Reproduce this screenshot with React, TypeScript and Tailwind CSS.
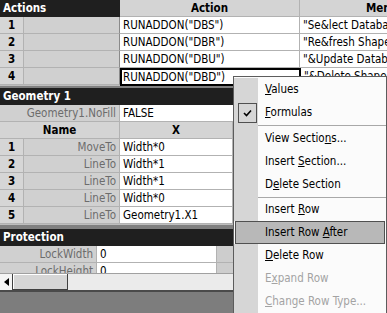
import React from "react";

// one grid cell of the sheet
function Cell({
  w,
  className = "",
  children,
}: {
  w: string;
  className?: string;
  children?: React.ReactNode;
}) {
  return (
    <div
      className={`${w} shrink-0 h-full border-r border-b border-[#b2b2b2] overflow-hidden whitespace-nowrap leading-[16px] ${className}`}
    >
      {children}
    </div>
  );
}

function SectionHeader({ title }: { title: string }) {
  return (
    <div className="h-[17px] flex bg-[#1f1f1f] text-white font-bold leading-[17px] pl-[3px] whitespace-nowrap">
      {title}
    </div>
  );
}

const actions = [
  { n: 1, action: 'RUNADDON("DBS")', menu: '"Se&lect Database Shapes"' },
  { n: 2, action: 'RUNADDON("DBR")', menu: '"Re&fresh Shape"' },
  { n: 3, action: 'RUNADDON("DBU")', menu: '"&Update Database"' },
  { n: 4, action: 'RUNADDON("DBD")', menu: '"&Delete Shape and Record"' },
];

const geometry = [
  { n: 1, name: "MoveTo", x: "Width*0" },
  { n: 2, name: "LineTo", x: "Width*1" },
  { n: 3, name: "LineTo", x: "Width*1" },
  { n: 4, name: "LineTo", x: "Width*0" },
  { n: 5, name: "LineTo", x: "Geometry1.X1" },
];

type Item = {
  label: React.ReactNode;
  checked?: boolean;
  active?: boolean;
  disabled?: boolean;
  sep?: number;
};

const items: Item[] = [
  { label: <><u>V</u>alues</> },
  { label: <><u>F</u>ormulas</>, checked: true },
  { sep: 3, label: null },
  { label: <>View Sectio<u>n</u>s...</> },
  { label: <>Insert <u>S</u>ection...</> },
  { label: <>D<u>e</u>lete Section</> },
  { sep: 2, label: null },
  { label: <>Insert <u>R</u>ow</> },
  { label: <>Insert Row <u>A</u>fter</>, active: true },
  { label: <><u>D</u>elete Row</> },
  { label: <>E<u>x</u>pand Row</>, disabled: true },
  { label: <><u>C</u>hange Row Type...</>, disabled: true },
];

function ContextMenu() {
  return (
    <div className="absolute left-[233px] top-[76px] w-[154px] h-[250px] border border-[#5c5c5c] bg-[#fbfbfb] flex flex-col pt-px">
      {items.map((it, i) => {
        if (it.sep) {
          return (
            <div key={i} className={`flex shrink-0 ${it.sep === 3 ? "h-[3px]" : "h-[2px]"}`}>
              <div className="w-[24px] bg-[#d6d6d6]" />
              <div className="flex-1 border-t border-[#a8a8a8] mt-px" />
            </div>
          );
        }
        if (it.active) {
          return (
            <div key={i} className="h-[23px] shrink-0 flex items-center ml-px mr-px border border-[#505050] bg-[#b8b8b8]">
              <div className="w-[22px] shrink-0" />
              <span className="pl-[7px] whitespace-nowrap">{it.label}</span>
            </div>
          );
        }
        return (
          <div key={i} className="h-[23px] shrink-0 flex">
            <div className="w-[24px] shrink-0 bg-[#d6d6d6] flex items-center justify-center">
              {it.checked && (
                <div className="w-[19px] h-[20px] ml-[3px] border border-[#505050] flex items-center justify-center">
                  <svg width="9" height="8" viewBox="0 0 9 8">
                    <path d="M1 4 L3.5 6.5 L8 1.5" fill="none" stroke="#000" strokeWidth="1.6" />
                  </svg>
                </div>
              )}
            </div>
            <div className="flex-1 pl-[7px] flex items-center">
              <span className={`whitespace-nowrap ${it.disabled ? "text-[#a3a3a3]" : "text-black"}`}>
                {it.label}
              </span>
            </div>
          </div>
        );
      })}
    </div>
  );
}

export default function App() {
  return (
    <div className="w-[387px] h-[313px] overflow-hidden relative bg-[#7d7d7d] font-['DejaVu_Sans',sans-serif] font-stretch-condensed text-[11.5px] text-black">
      <div className="h-[273px] overflow-hidden">
        {/* Actions */}
        <div className="h-[17px] flex">
          <div className="w-[120px] shrink-0 bg-[#1f1f1f] text-white font-bold leading-[17px] pl-[3px]">
            Actions
          </div>
          <Cell w="w-[180px]" className="bg-[#d4d4d4] font-bold text-center">
            Action
          </Cell>
          <Cell w="w-[165px]" className="bg-[#d4d4d4] font-bold text-center">
            Menu
          </Cell>
        </div>
        {actions.map((a) => (
          <div key={a.n} className="h-[17px] flex">
            <Cell w="w-[24px]" className="bg-[#d6d6d6] font-bold text-center">
              {a.n}
            </Cell>
            <Cell w="w-[96px]" className="bg-[#d0d0d0] border-r-[#8a8a8a]" />
            {a.n === 4 ? (
              <div className="w-[181px] shrink-0 h-[18px] border-2 border-black bg-white pl-[1px] leading-[14px] whitespace-nowrap overflow-hidden">
                {a.action}
              </div>
            ) : (
              <Cell w="w-[180px]" className="bg-white pl-[3px]">
                {a.action}
              </Cell>
            )}
            <Cell w="w-[165px]" className="bg-white pl-[3px]">
              {a.menu}
            </Cell>
          </div>
        ))}
        <div className="h-[3px] bg-[#808080] border-t border-[#bdbdbd]" />

        {/* Geometry 1 */}
        <SectionHeader title="Geometry 1" />
        <div className="h-[17px] flex">
          <Cell w="w-[120px]" className="bg-[#d0d0d0] text-right pr-[3px] text-[#6c6c6c]">
            Geometry1.NoFill
          </Cell>
          <Cell w="w-[150px]" className="bg-white pl-[3px]">
            FALSE
          </Cell>
        </div>
        <div className="h-[17px] flex">
          <Cell w="w-[120px]" className="bg-[#d4d4d4] font-bold text-center">
            Name
          </Cell>
          <Cell w="w-[113px]" className="bg-[#d4d4d4] font-bold text-center">
            X
          </Cell>
          <Cell w="w-[60px]" className="bg-[#d4d4d4]" />
        </div>
        {geometry.map((g) => (
          <div key={g.n} className="h-[17px] flex">
            <Cell w="w-[24px]" className="bg-[#d6d6d6] font-bold text-center">
              {g.n}
            </Cell>
            <Cell w="w-[96px]" className="bg-[#d0d0d0] text-right pr-[3px] text-[#6c6c6c]">
              {g.name}
            </Cell>
            <Cell w="w-[113px]" className="bg-white pl-[3px]">
              {g.x}
            </Cell>
            <Cell w="w-[60px]" className="bg-white" />
          </div>
        ))}
        <div className="h-[5px] bg-[#808080] border-t border-[#bdbdbd]" />

        {/* Protection */}
        <SectionHeader title="Protection" />
        {["LockWidth", "LockHeight"].map((p) => (
          <div key={p} className="h-[17px] flex">
            <Cell w="w-[97px]" className="bg-[#d0d0d0] text-right pr-[3px] text-[#6c6c6c]">
              {p}
            </Cell>
            <Cell w="w-[120px]" className="bg-white pl-[3px]">
              0
            </Cell>
            <Cell w="w-[60px]" className="bg-[#cdcdcd]" />
          </div>
        ))}
      </div>

      {/* horizontal scrollbar */}
      <div className="h-[17px] flex bg-[#ebebeb] border-t border-[#a0a0a0]">
        <div className="w-[13px] shrink-0 bg-[#f4f4f4] border-r border-[#404040] flex items-center justify-center">
          <svg width="5" height="8" viewBox="0 0 5 8">
            <path d="M5 0 L0 4 L5 8 Z" fill="#000" />
          </svg>
        </div>
        <div className="w-[55px] shrink-0 bg-[#d6d6d6] border-r border-b border-[#404040] shadow-[inset_1px_1px_0_#ffffff]" />
      </div>
      <div className="h-[2px] bg-[#4a4a4a]" />

      <ContextMenu />
    </div>
  );
}
